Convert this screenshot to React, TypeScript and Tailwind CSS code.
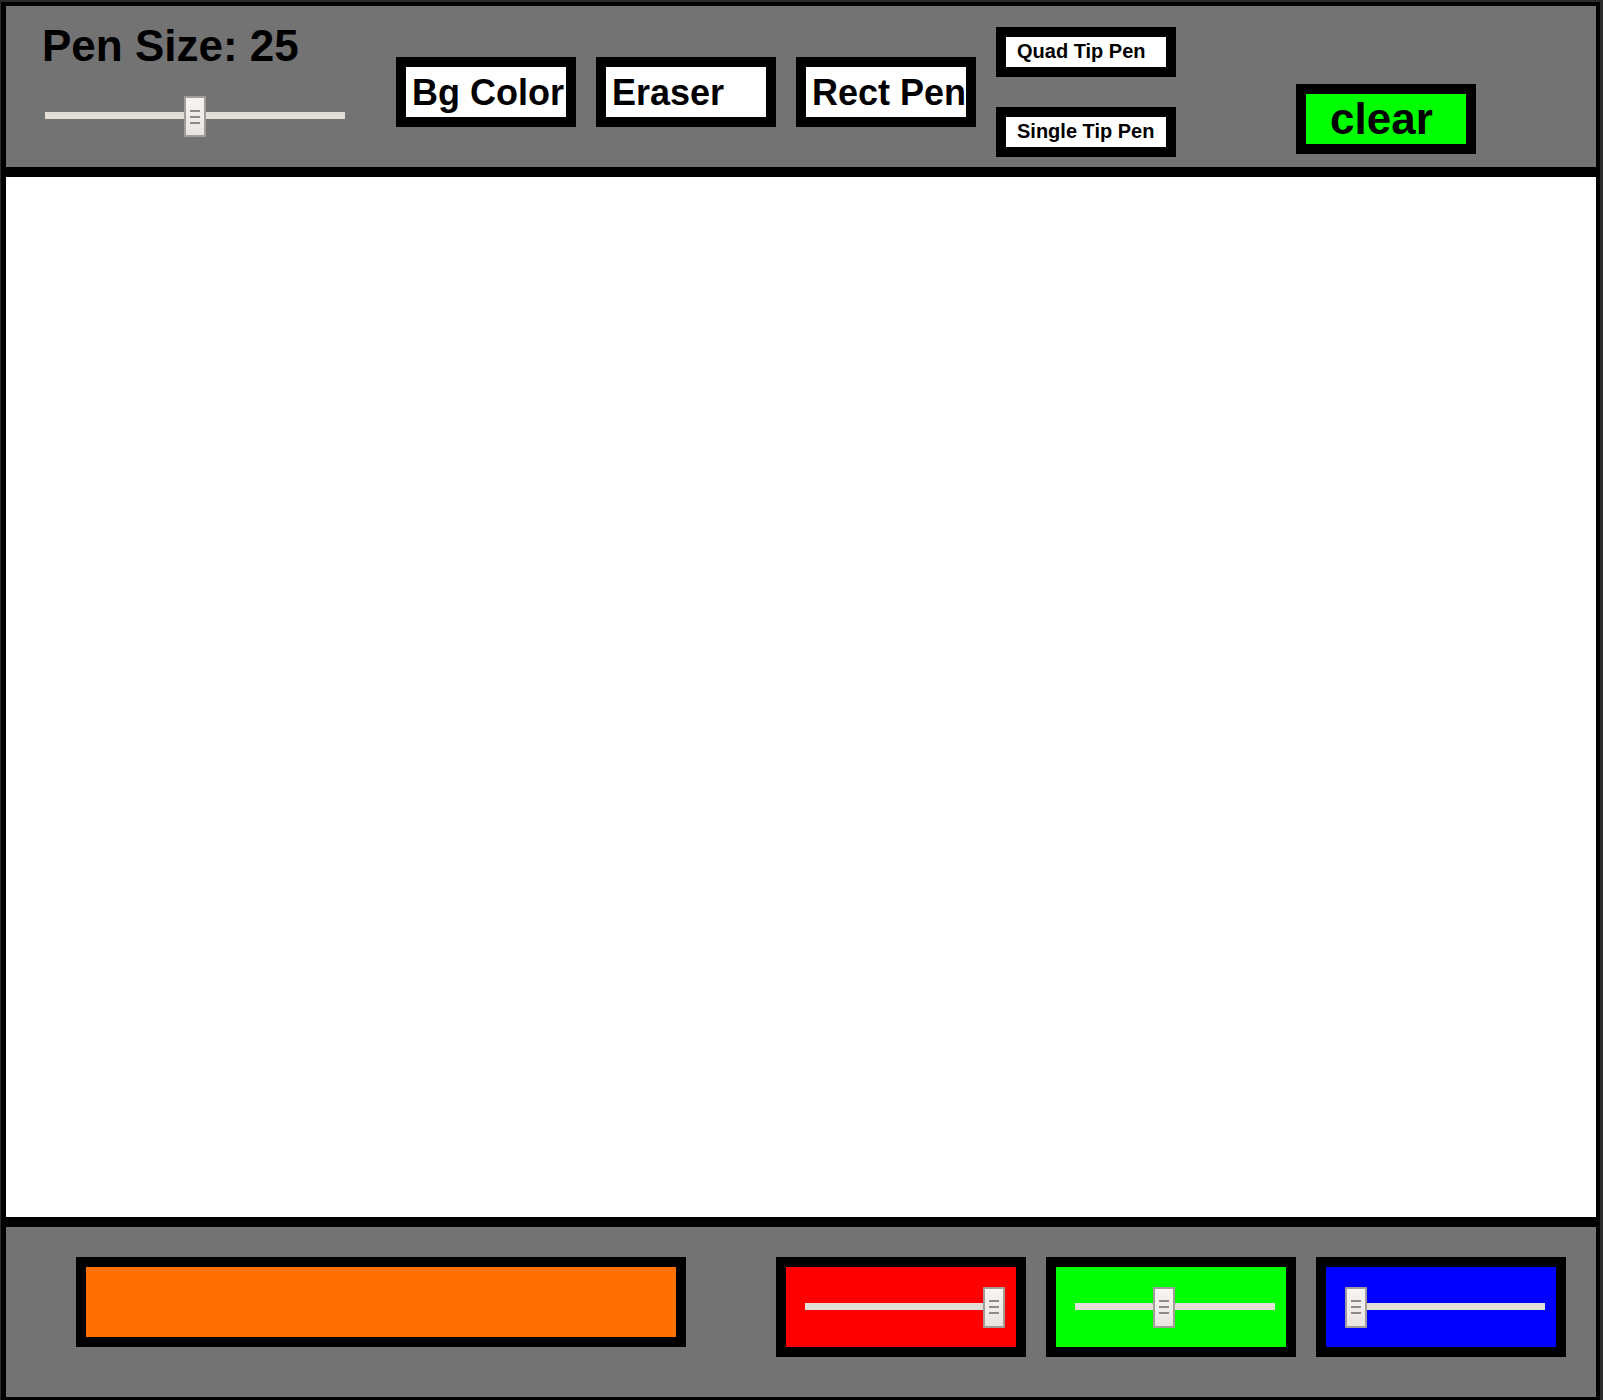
import React from "react";

const font = "font-['Liberation_Sans',Arial,sans-serif] font-bold text-black";

// grip thumb, same look as the native range thumb in the shot
function Thumb() {
  return (
    <div className="flex h-[41px] w-[22px] flex-col items-center justify-center gap-[4px] rounded-[1px] border-2 border-[#a29d97] bg-gradient-to-b from-[#f6f5f3] to-[#e8e5e1]">
      <span className="h-[2px] w-[10px] bg-[#8f8a84]" />
      <span className="h-[2px] w-[10px] bg-[#8f8a84]" />
      <span className="h-[2px] w-[10px] bg-[#8f8a84]" />
    </div>
  );
}

function Slider({ value, max, width, className = "" }: { value: number; max: number; width: number; className?: string }) {
  const left = (value / max) * (width - 22);
  return (
    <div className={`relative h-[41px] ${className}`}>
      <div className="absolute left-0 right-0 top-[16px] h-[7px] bg-[#e3ded8]" />
      <div className="absolute top-0" style={{ left }}>
        <Thumb />
      </div>
    </div>
  );
}

function BigBtn({ label }: { label: string }) {
  return (
    <button className={`flex h-[70px] w-[180px] items-center whitespace-nowrap border-[10px] border-black bg-white pl-[6px] pt-[2px] text-[36px] leading-none ${font}`}>
      {label}
    </button>
  );
}

function TipBtn({ label }: { label: string }) {
  return (
    <button className={`flex h-[50px] w-[180px] items-center whitespace-nowrap border-[10px] border-black bg-white pb-[2px] pl-[11px] text-[20px] leading-none ${font}`}>
      {label}
    </button>
  );
}

const channels = [
  { name: "r", value: 255, bg: "bg-[#ff0000]" },
  { name: "g", value: 112, bg: "bg-[#00ff00]" },
  { name: "b", value: 0, bg: "bg-[#0000ff]" },
];

export default function App() {
  const penSize = 25;

  return (
    <div className="h-[1400px] bg-[#2b2b2b] pl-[1px] pr-[3px] pt-[2px]">
      <div className="flex flex-col border-b-[3px] border-l-[5px] border-r-4 border-t-4 border-black">
        {/* top toolbar */}
        <div className="flex h-[171px] shrink-0 items-start border-b-[10px] border-black bg-[#737373]">
          <div className="ml-[34px] mt-[18px] flex w-[356px] flex-col">
            <h1 className={`ml-[2px] text-[44px] leading-none ${font}`}>Pen Size: {penSize}</h1>
            <Slider value={penSize} max={50} width={300} className="ml-[5px] mt-[28px] w-[300px]" />
          </div>

          <div className="mt-[51px] flex gap-[20px]">
            <BigBtn label="Bg Color" />
            <BigBtn label="Eraser" />
            <BigBtn label="Rect Pen" />
          </div>

          <div className="ml-[20px] mt-[21px] flex flex-col gap-[30px]">
            <TipBtn label="Quad Tip Pen" />
            <TipBtn label="Single Tip Pen" />
          </div>

          <button className={`ml-[120px] mt-[78px] flex h-[70px] w-[180px] items-center border-[10px] border-black bg-[#00ff00] pl-[24px] text-[44px] leading-none ${font}`}>
            clear
          </button>
        </div>

        {/* drawing area */}
        <div className="h-[1040px] shrink-0 bg-white" />

        {/* colour toolbar */}
        <div className="flex h-[180px] shrink-0 items-start border-t-[10px] border-black bg-[#737373]">
          <div className="ml-[70px] mt-[30px] h-[90px] w-[610px] border-[10px] border-black bg-[#ff7000]" />
          <div className="ml-[90px] mt-[30px] flex gap-[20px]">
            {channels.map((c) => (
              <div key={c.name} className={`flex h-[100px] w-[250px] items-center border-[10px] border-black pl-[19px] ${c.bg}`}>
                <Slider value={c.value} max={255} width={200} className="w-[200px]" />
              </div>
            ))}
          </div>
        </div>
      </div>
    </div>
  );
}
